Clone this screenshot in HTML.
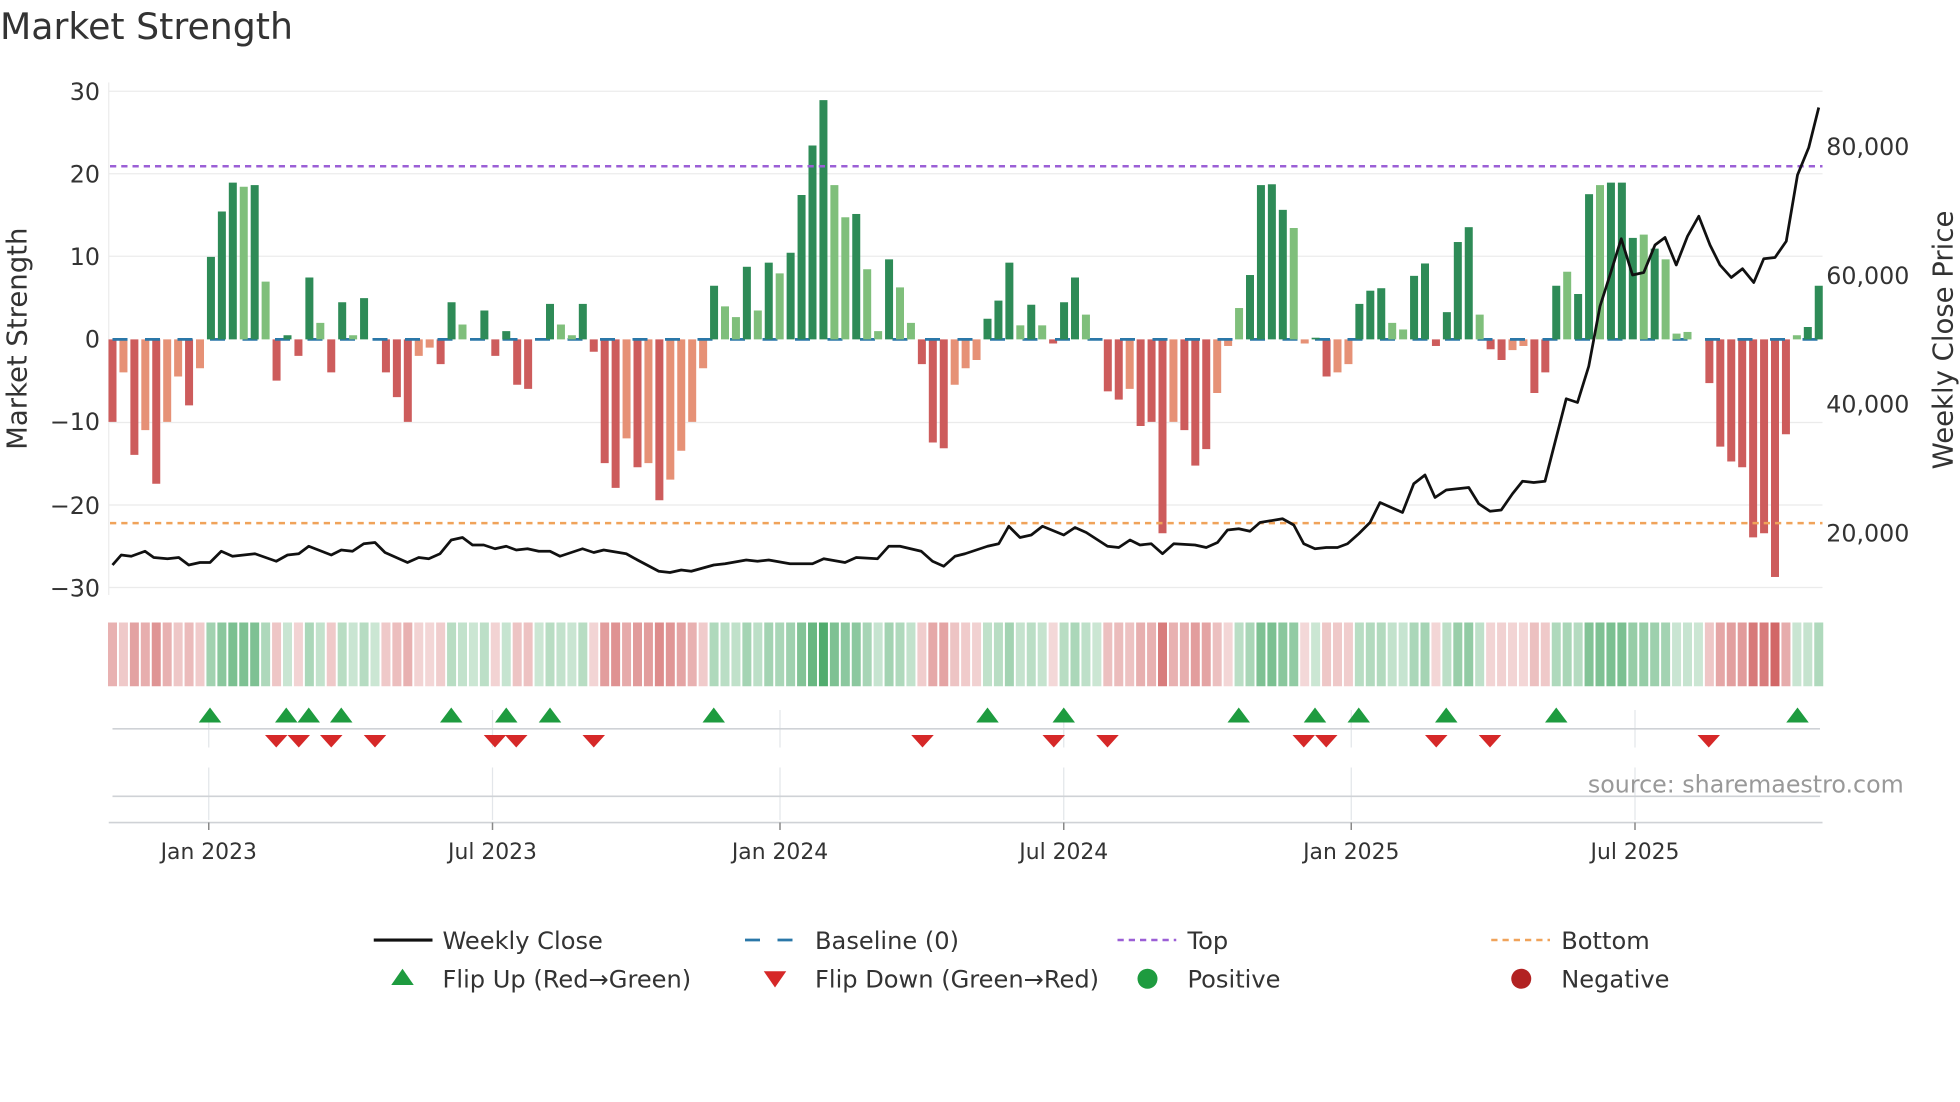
<!DOCTYPE html>
<html><head><meta charset="utf-8"><style>
html,body{margin:0;padding:0;background:#fff;width:1960px;height:1102px;overflow:hidden}
svg{display:block}
text{font-family:"DejaVu Sans","Liberation Sans",sans-serif;fill:#333}
</style></head><body>
<svg id="s" width="1960" height="1102" viewBox="0 0 1568 881.6" xmlns="http://www.w3.org/2000/svg">
<rect width="1568" height="882" fill="#fff"/>
<text x="0" y="31" font-size="29" fill="#333">Market Strength</text>
<g id="grid" stroke="#ebebeb" stroke-width="1">
<line x1="87" x2="1458" y1="73" y2="73"/><line x1="87" x2="1458" y1="139" y2="139"/>
<line x1="87" x2="1458" y1="205" y2="205"/><line x1="87" x2="1458" y1="338" y2="338"/>
<line x1="87" x2="1458" y1="404" y2="404"/><line x1="87" x2="1458" y1="470" y2="470"/>
<line x1="87" x2="87" y1="66" y2="476"/>
</g>
<g font-size="19" text-anchor="end">
<text x="80" y="80">30</text><text x="80" y="146">20</text><text x="80" y="212">10</text>
<text x="80" y="278">0</text><text x="80" y="344">−10</text><text x="80" y="411">−20</text><text x="80" y="477">−30</text>
</g>
<g font-size="19">
<text x="1461" y="124">80,000</text><text x="1461" y="227">60,000</text>
<text x="1461" y="330">40,000</text><text x="1461" y="433">20,000</text>
</g>
<text transform="translate(21,271) rotate(-90)" font-size="22" text-anchor="middle">Market Strength</text>
<text transform="translate(1562,272) rotate(-90)" font-size="22" text-anchor="middle">Weekly Close Price</text>
<g id="neg"></g>
<line x1="90" x2="1456" y1="271.5" y2="271.5" stroke="#2a77a8" stroke-width="2.2" stroke-dasharray="12,14"/>
<g id="pos"></g>
<line x1="88" x2="1458" y1="133" y2="133" stroke="#9b5fd6" stroke-width="2" stroke-dasharray="5,4"/>
<line x1="88" x2="1458" y1="418.5" y2="418.5" stroke="#f0a35a" stroke-width="2" stroke-dasharray="5,4"/>
<polyline id="price" fill="none" stroke="#111" stroke-width="2.2" stroke-linejoin="round"/>
<g id="heat"></g>
<g stroke="#e3e6ea" stroke-width="1">
<line x1="167" x2="167" y1="568" y2="598"/><line x1="394" x2="394" y1="568" y2="598"/><line x1="624" x2="624" y1="568" y2="598"/>
<line x1="851" x2="851" y1="568" y2="598"/><line x1="1081" x2="1081" y1="568" y2="598"/><line x1="1308" x2="1308" y1="568" y2="598"/>
<line x1="167" x2="167" y1="614" y2="656"/><line x1="394" x2="394" y1="614" y2="656"/><line x1="624" x2="624" y1="614" y2="656"/>
<line x1="851" x2="851" y1="614" y2="656"/><line x1="1081" x2="1081" y1="614" y2="656"/><line x1="1308" x2="1308" y1="614" y2="656"/>
</g>
<line x1="90" x2="1456" y1="583" y2="583" stroke="#cfd2d6" stroke-width="1.3"/>
<line x1="90" x2="1456" y1="637" y2="637" stroke="#cfd2d6" stroke-width="1.3"/>
<line x1="87" x2="1458" y1="658" y2="658" stroke="#cfd2d6" stroke-width="1.3"/>
<g stroke="#888" stroke-width="1.2">
<line x1="167" x2="167" y1="658" y2="664"/><line x1="394" x2="394" y1="658" y2="664"/><line x1="624" x2="624" y1="658" y2="664"/>
<line x1="851" x2="851" y1="658" y2="664"/><line x1="1081" x2="1081" y1="658" y2="664"/><line x1="1308" x2="1308" y1="658" y2="664"/>
</g>
<g id="mk"></g>
<text x="1523" y="634" font-size="19" text-anchor="end" style="fill:#999">source: sharemaestro.com</text>
<g font-size="17.5" text-anchor="middle">
<text x="167" y="687">Jan 2023</text><text x="394" y="687">Jul 2023</text><text x="624" y="687">Jan 2024</text>
<text x="851" y="687">Jul 2024</text><text x="1081" y="687">Jan 2025</text><text x="1308" y="687">Jul 2025</text>
</g>
<g font-size="19.3">
<line x1="299" x2="346" y1="752" y2="752" stroke="#111" stroke-width="2.5"/><text x="354" y="759">Weekly Close</text>
<line x1="596" x2="643" y1="752" y2="752" stroke="#2a77a8" stroke-width="2.2" stroke-dasharray="12,14"/><text x="652" y="759">Baseline (0)</text>
<line x1="894" x2="941" y1="752" y2="752" stroke="#9b5fd6" stroke-width="2" stroke-dasharray="5,4"/><text x="950" y="759">Top</text>
<line x1="1193" x2="1240" y1="752" y2="752" stroke="#f0a35a" stroke-width="2" stroke-dasharray="5,4"/><text x="1249" y="759">Bottom</text>
<polygon points="313,788 322,775 331,788" fill="#1e9b3f"/><text x="354" y="790">Flip Up (Red→Green)</text>
<polygon points="611,777 620,790 629,777" fill="#d62828"/><text x="652" y="790">Flip Down (Green→Red)</text>
<circle cx="918" cy="783" r="8" fill="#1e9b3f"/><text x="950" y="790">Positive</text>
<circle cx="1217" cy="783" r="8" fill="#b22222"/><text x="1249" y="790">Negative</text>
</g>
</svg>
<script>
var v=[-10,-4,-14,-11,-17.5,-10,-4.5,-8,-3.5,10,15.5,19,18.5,18.7,7,-5,0.5,-2,7.5,2,-4,4.5,0.5,5,0,-4,-7,-10,-2,-1,-3,4.5,1.8,0,3.5,-2,1,-5.5,-6,0,4.3,1.8,0.5,4.3,-1.5,-15,-18,-12,-15.5,-15,-19.5,-17,-13.5,-10,-3.5,6.5,4,2.7,8.8,3.5,9.3,8,10.5,17.5,23.5,29,18.7,14.8,15.2,8.5,1,9.7,6.3,2,-3,-12.5,-13.2,-5.5,-3.5,-2.5,2.5,4.7,9.3,1.7,4.2,1.7,-0.5,4.5,7.5,3,0,-6.3,-7.3,-6,-10.5,-10,-23.5,-10,-11,-15.3,-13.3,-6.5,-0.8,3.8,7.8,18.7,18.8,15.7,13.5,-0.5,0.2,-4.5,-4,-3,4.3,5.9,6.2,2,1.2,7.7,9.2,-0.8,3.3,11.8,13.6,3,-1.2,-2.5,-1.3,-0.8,-6.5,-4,6.5,8.2,5.5,17.6,18.7,19,19,12.3,12.7,11,9.7,0.7,0.9,0,-5.3,-13,-14.8,-15.5,-24,-23.5,-28.8,-11.5,0.5,1.5,6.5];
var light={};
[1,3,5,6,8,12,14,19,22,28,29,32,41,42,47,49,51,52,53,54,56,57,59,61,66,67,69,70,72,73,77,78,79,83,85,89,93,97,101,102,103,108,109,112,113,117,118,125,128,129,133,136,140,142,143,144,154].forEach(function(i){light[i]=1});
var NS="http://www.w3.org/2000/svg";
function el(t,a,p){var e=document.createElementNS(NS,t);for(var k in a)e.setAttribute(k,a[k]);p.appendChild(e);return e}
var neg=document.getElementById('neg'),pos=document.getElementById('pos'),heat=document.getElementById('heat');
var x0=90,dx=(1455-90)/(v.length-1),u=6.6,z=271.5;
v.forEach(function(d,i){
 var x=x0+i*dx, h=Math.abs(d)*u, c;
 if(d>=0){c=light[i]?'#7fbf7b':'#2e8b57';if(h>0.5)el('rect',{x:x-3.2,y:z-h,width:6.4,height:h,fill:c},pos);}
 else{c=light[i]?'#e69176':'#cd5c5c';el('rect',{x:x-3.2,y:z,width:6.4,height:h,fill:c},neg);}
 var t=Math.min(1,Math.abs(d)/30), col;
 if(d>=0){var a=0.25+0.6*t;col='rgba(46,155,80,'+a.toFixed(2)+')';}
 else{var a=0.2+0.65*t;col='rgba(200,70,70,'+a.toFixed(2)+')';}
 el('rect',{x:x-3.6,y:498,width:7.2,height:51,fill:col},heat);
});
var p=[90,452,97,444,105,445,116,441,123,446,134,447,143,446,151,452,160,450,168,450,177,441,186,445,204,443,221,449,230,444,239,443,247,437,265,444,273,440,282,441,291,435,300,434,308,442,326,450,335,446,343,447,352,443,361,432,370,430,378,436,387,436,396,439,405,437,413,440,422,439,431,441,440,441,448,445,466,439,475,442,483,440,501,443,510,448,527,457,536,458,545,456,553,457,571,452,580,451,597,448,606,449,615,448,632,451,650,451,659,447,676,450,685,446,702,447,711,437,720,437,737,441,746,449,755,453,764,445,772,443,790,437,799,435,807,421,816,430,825,428,834,421,851,428,860,422,869,426,886,437,895,438,904,432,912,436,921,435,930,443,939,435,956,436,965,438,974,434,982,424,991,423,1000,425,1008,418,1026,415,1035,420,1043,435,1052,439,1061,438,1070,438,1078,435,1087,427,1096,418,1104,402,1113,406,1122,410,1131,387,1140,380,1148,398,1157,392,1175,390,1183,403,1192,409,1201,408,1210,395,1218,385,1227,386,1236,385,1245,350,1253,319,1262,322,1271,293,1280,245,1288,220,1297,191,1306,220,1315,218,1324,196,1332,190,1341,212,1350,189,1359,173,1368,196,1376,212,1385,222,1394,215,1403,226,1411,207,1420,206,1429,193,1438,140,1447,118,1455,86];
var s='';for(var i=0;i<p.length;i+=2)s+=p[i]+','+p[i+1]+' ';
document.getElementById('price').setAttribute('points',s);
var mk=document.getElementById('mk');
[168,229,247,273,361,405,440,571,790,851,991,1052,1087,1157,1245,1438].forEach(function(x){el('polygon',{points:(x-9)+',578 '+x+',566 '+(x+9)+',578',fill:'#1e9b3f'},mk)});
[221,239,265,300,396,413,475,738,843,886,1043,1061,1149,1192,1367].forEach(function(x){el('polygon',{points:(x-9)+',588 '+x+',598 '+(x+9)+',588',fill:'#d62828'},mk)});
</script>
</body></html>
